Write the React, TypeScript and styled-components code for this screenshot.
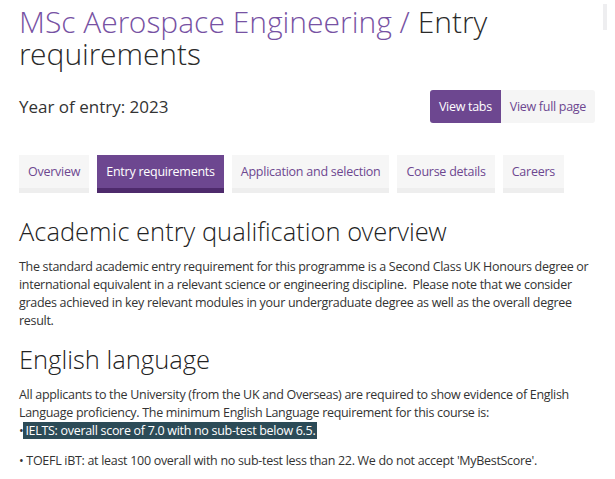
import React from "react";
import styled, { createGlobalStyle } from "styled-components";

const GlobalStyle = createGlobalStyle`
  html, body {
    margin: 0;
    padding: 0;
    background: #ffffff;
  }
  body {
    font-family: "Open Sans", "Noto Sans", sans-serif;
    color: #333333;
    overflow: hidden;
  }
`;

const Page = styled.main`
  position: relative;
  padding: 0 19px;
  width: 577px;
`;

/* faint scroll thumb in the top-right corner of the frame */
const ScrollThumb = styled.div`
  position: fixed;
  top: 4px;
  right: 8px;
  width: 4px;
  height: 26px;
  background: #eeeef0;
`;

const Title = styled.h1`
  margin: 6px 0 0;
  font-family: "Open Sans Light", "Open Sans", sans-serif;
  font-size: 30px;
  line-height: 32px;
  font-weight: 300;
  color: #2a2a2a;
`;

const Crumb = styled.span`
  color: #7752a3;
`;

const MetaRow = styled.div`
  display: flex;
  align-items: center;
  justify-content: space-between;
  margin-top: 20px;
  height: 33px;
`;

const Year = styled.div`
  font-size: 17px;
  color: #333333;
`;

const ViewToggle = styled.div`
  display: flex;
  border-radius: 3px;
  overflow: hidden;
  margin-right: 1px;
`;

const ToggleButton = styled.button<{ $active?: boolean }>`
  font-family: inherit;
  font-size: 12.5px;
  letter-spacing: -0.3px;
  height: 33px;
  padding: 0 9px;
  border: none;
  background: ${(p) => (p.$active ? "#6d4790" : "#f5f5f5")};
  color: ${(p) => (p.$active ? "#ffffff" : "#6d4790")};
  cursor: pointer;
`;

const Tabs = styled.nav`
  display: flex;
  gap: 8px;
  margin-top: 32px;
`;

const Tab = styled.a<{ $active?: boolean }>`
  display: block;
  white-space: nowrap;
  height: 33px;
  line-height: 33px;
  padding: 0 9px;
  font-size: 12.5px;
  letter-spacing: -0.25px;
  text-decoration: none;
  background: ${(p) => (p.$active ? "#6d4790" : "#f6f6f6")};
  color: ${(p) => (p.$active ? "#ffffff" : "#6d4790")};
  border-bottom: 5px solid ${(p) => (p.$active ? "#4e2a6c" : "#eeeeee")};
`;

const Heading = styled.h2<{ $gap: number }>`
  margin: ${(p) => p.$gap}px 0 0;
  font-family: "Open Sans Light", "Open Sans", sans-serif;
  font-size: 25.5px;
  line-height: 34px;
  font-weight: 300;
  color: #222222;
`;

const Para = styled.p<{ $gap?: number }>`
  margin: ${(p) => p.$gap ?? 10}px 0 0;
  font-size: 12.5px;
  letter-spacing: -0.3px;
  line-height: 18px;
  color: #333333;
`;

const Highlight = styled.span`
  background: #2c4b57;
  color: #ffffff;
  padding: 0 2px;
`;

const tabs = [
  "Overview",
  "Entry requirements",
  "Application and selection",
  "Course details",
  "Careers",
];

export default function App() {
  return (
    <>
      <GlobalStyle />
      <Page>
        <ScrollThumb />
        <Title>
          <Crumb>MSc Aerospace Engineering / </Crumb>Entry requirements
        </Title>
        <MetaRow>
          <Year>Year of entry: 2023</Year>
          <ViewToggle>
            <ToggleButton $active>View tabs</ToggleButton>
            <ToggleButton>View full page</ToggleButton>
          </ViewToggle>
        </MetaRow>
        <Tabs>
          {tabs.map((t) => (
            <Tab key={t} href="#" $active={t === "Entry requirements"}>
              {t}
            </Tab>
          ))}
        </Tabs>
        <Heading $gap={21}>Academic entry qualification overview</Heading>
        <Para>
          The standard academic entry requirement for this programme is a Second
          Class UK Honours degree or international equivalent in a relevant
          science or engineering discipline.&nbsp; Please note that we consider
          grades achieved in key relevant modules in your undergraduate degree as
          well as the overall degree result.
        </Para>
        <Heading $gap={12}>English language</Heading>
        <Para>
          All applicants to the University (from the UK and Overseas) are
          required to show evidence of English Language proficiency. The minimum
          English Language requirement for this course is:
          <br />•<Highlight>IELTS: overall score of 7.0 with no sub-test below 6.5.</Highlight>
        </Para>
        <Para $gap={12}>
          • TOEFL iBT: at least 100 overall with no sub-test less than 22. We do
          not accept 'MyBestScore'.
        </Para>
      </Page>
    </>
  );
}
